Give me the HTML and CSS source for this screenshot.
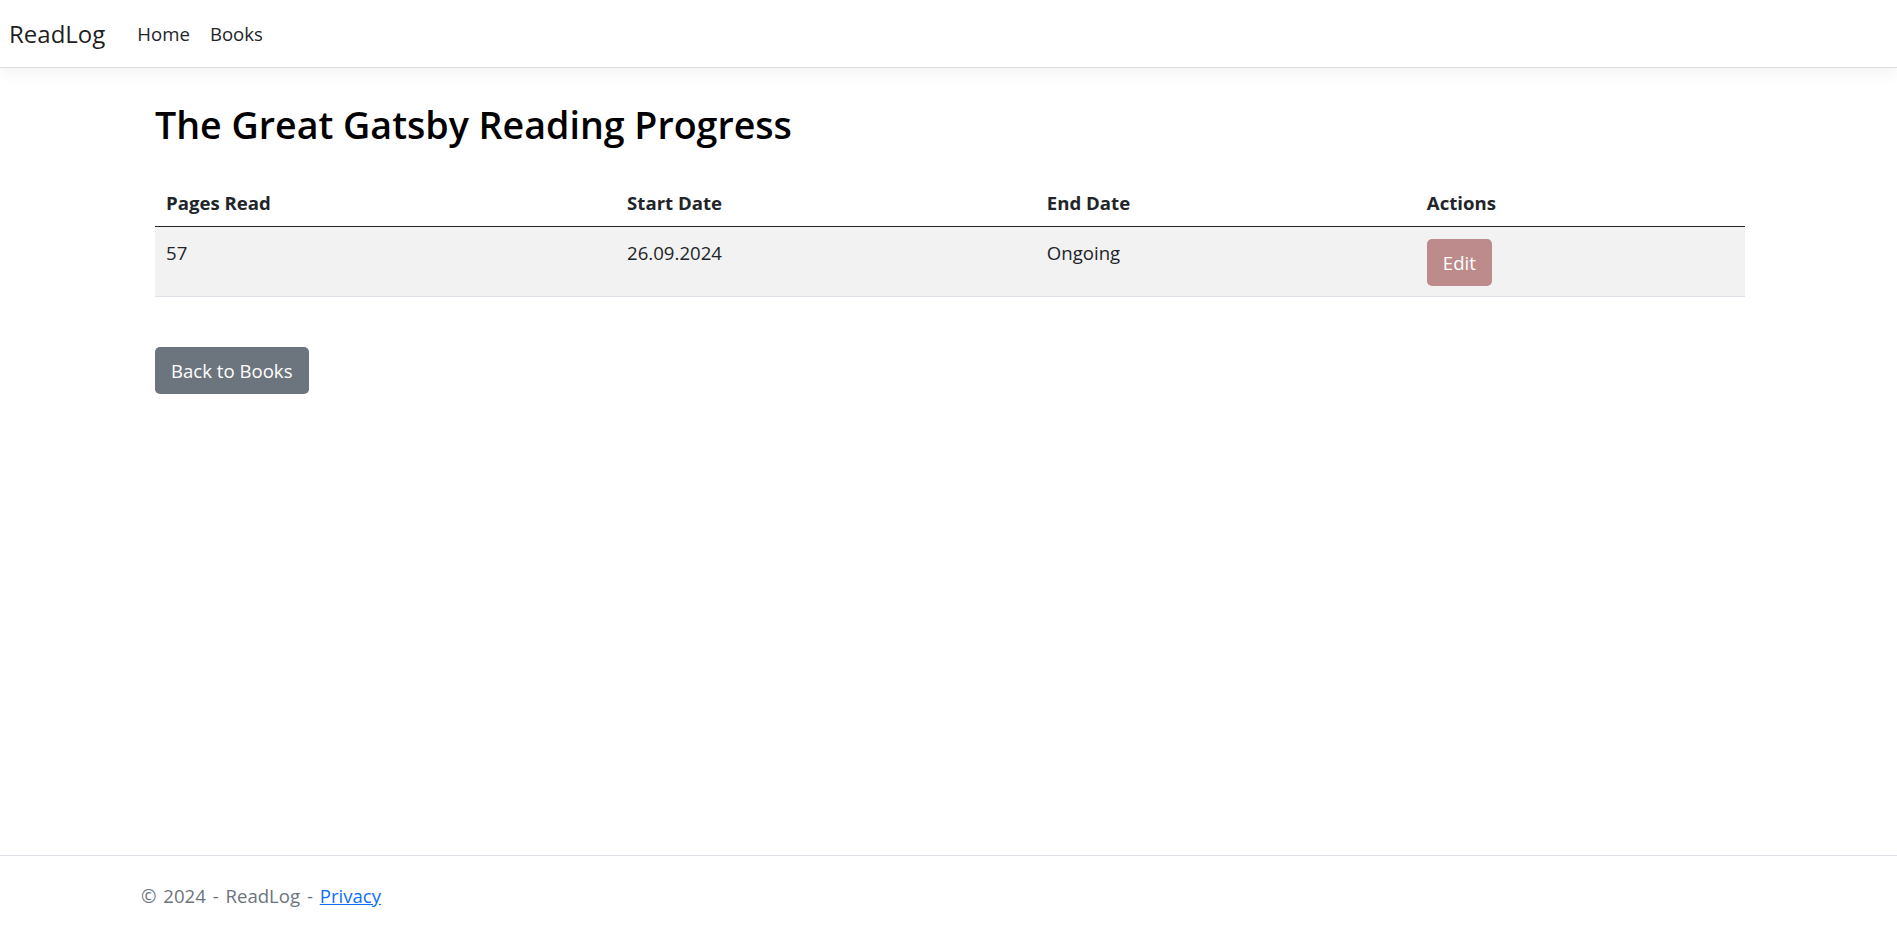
FILE: index.html
```html
<!DOCTYPE html>
<html lang="en">
<head>
<meta charset="utf-8">
<title>The Great Gatsby Reading Progress - ReadLog</title>
<link rel="stylesheet" href="styles.css">
</head>
<body>
<header class="navbar">
  <a class="brand" href="#">ReadLog</a>
  <nav class="nav-links">
    <a class="nav-link" href="#">Home</a>
    <a class="nav-link" href="#">Books</a>
  </nav>
</header>

<main class="page">
  <h1 class="title">The Great Gatsby Reading Progress</h1>
  <table class="progress-table">
    <thead>
      <tr>
        <th class="col-pages">Pages Read</th>
        <th class="col-start">Start Date</th>
        <th class="col-end">End Date</th>
        <th class="col-actions">Actions</th>
      </tr>
    </thead>
    <tbody>
      <tr>
        <td>57</td>
        <td>26.09.2024</td>
        <td>Ongoing</td>
        <td><a class="btn btn-edit" href="#">Edit</a></td>
      </tr>
    </tbody>
  </table>
  <a class="btn btn-back" href="#">Back to Books</a>
</main>

<footer class="footer">
  <div class="footer-inner">&copy; 2024 - ReadLog - <a class="footer-link" href="#">Privacy</a></div>
</footer>
</body>
</html>
```

FILE: styles.css
```css
* {
  box-sizing: border-box;
}

html, body {
  margin: 0;
  padding: 0;
}

body {
  min-height: 100vh;
  display: flex;
  flex-direction: column;
  font-family: "Segoe UI", "Open Sans", "Noto Sans", sans-serif;
  font-size: 18.6px;
  line-height: 1.5;
  color: #212529;
  background: #fff;
}

a {
  text-decoration: none;
}

/* Navbar */
.navbar {
  height: 68px;
  display: flex;
  align-items: center;
  padding: 0 0 0 9px;
  background: #fff;
  border-bottom: 1px solid #dcdcdc;
  box-shadow: 0 5px 15px rgba(0, 0, 0, 0.05);
}

.brand {
  font-size: 24px;
  color: rgba(0, 0, 0, 0.9);
  margin-right: 22px;
  line-height: 1.5;
}

.nav-links {
  display: flex;
}

.nav-link {
  color: #212529;
  padding: 0 10px;
}

/* Main */
.page {
  padding: 0 152px 0 155px;
}

.title {
  margin: 34px 0 32px;
  font-size: 37.6px;
  font-weight: 600;
  line-height: 1.2;
  color: #000;
}

.progress-table {
  width: 100%;
  border-collapse: collapse;
  margin-bottom: 50px;
}

.progress-table th,
.progress-table td {
  text-align: left;
  vertical-align: top;
  padding: 9.7px 11px;
}

.progress-table th {
  font-weight: 700;
  border-bottom: 1.5px solid #212529;
}

.progress-table td {
  padding-top: 11.5px;
  background: #f2f2f2;
  border-bottom: 1px solid #dee2e6;
}

.col-pages { width: 29%; }
.col-start { width: 26.4%; }
.col-end { width: 23.9%; }
.col-actions { width: 20.7%; }

.btn {
  display: inline-block;
  color: #fff;
  border-radius: 5px;
  line-height: 47px;
  height: 47px;
  padding: 0 16px;
}

.btn-edit {
  background: #be8b8c;
}

.btn-back {
  background: #6c757d;
  padding: 0 16px;
}

/* Footer */
.footer {
  margin-top: auto;
  border-top: 1px solid #dee2e6;
  height: 70px;
}

.footer-inner {
  padding-left: 141px;
  padding-top: 4px;
  line-height: 72px;
  color: #6c757d;
  white-space: nowrap;
  word-spacing: 2px;
}

.footer-link {
  color: #0d6efd;
  text-decoration: underline;
}
```
